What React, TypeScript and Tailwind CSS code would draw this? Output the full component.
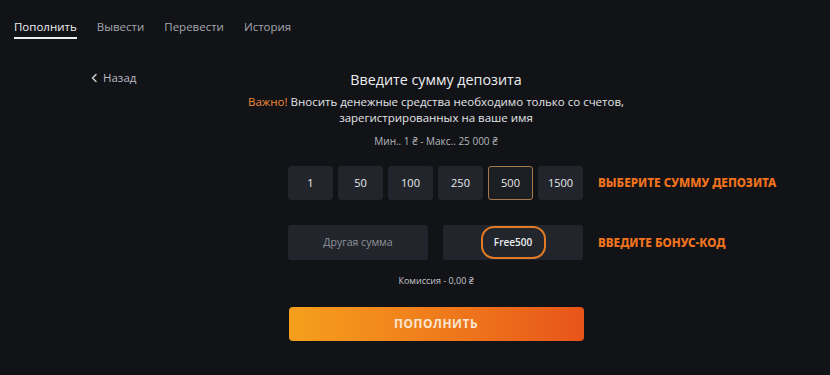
import React, { useState } from 'react';

const tabs = ['Пополнить', 'Вывести', 'Перевести', 'История'];
const amounts = ['1', '50', '100', '250', '500', '1500'];

const App: React.FC = () => {
    const [activeTab, setActiveTab] = useState('Пополнить');
    const [amount, setAmount] = useState('500');

    return (
        <div className="w-[830px] h-[375px] overflow-hidden bg-[#121317] text-[#e6e7ea]" style={{ fontFamily: '"Open Sans", "Noto Sans", sans-serif' }}>
            {/* Tabs */}
            <div className="flex gap-[20px] pl-[14px] pt-[19px]">
                {tabs.map(tab => (
                    <button
                        key={tab}
                        onClick={() => setActiveTab(tab)}
                        className={`text-[11.5px] leading-[16px] pb-[2px] border-b-2 ${activeTab === tab ? 'text-[#eceef0] border-[#eceef0]' : 'text-[#a3a7ae] border-transparent'}`}
                    >
                        {tab}
                    </button>
                ))}
            </div>

            <div className="flex pt-[30px]">
                {/* Back link */}
                <div className="w-[250px] pl-[90px]">
                    <button className="flex items-center gap-[4px] text-[11.5px] text-[#b9bcc2]">
                        <svg width="9" height="10" viewBox="0 0 9 10" fill="none">
                            <path d="M6 1.5L2.5 5L6 8.5" stroke="#c3c6cb" strokeWidth="1.6" strokeLinecap="round" strokeLinejoin="round" />
                        </svg>
                        Назад
                    </button>
                </div>

                {/* Main column */}
                <div className="w-[372px] flex flex-col items-center">
                    <h1 className="text-[14.3px] leading-[22px] text-[#eceef0]">Введите сумму депозита</h1>
                    <p className="mt-[3px] text-[11.5px] leading-[16px] text-center text-[#e2e4e7] whitespace-nowrap">
                        <span className="text-[#ee8a34]">Важно!</span> Вносить денежные средства необходимо только со счетов,
                        <br />
                        зарегистрированных на ваше имя
                    </p>
                    <p className="mt-[8px] text-[10px] leading-[14px] text-[#b4b7bd]">Мин.. 1 ₴ - Макс.. 25 000 ₴</p>

                    <div className="self-start ml-[38px] mt-[18px] flex items-center">
                        <div className="flex gap-[5px]">
                            {amounts.map(a => (
                                <button
                                    key={a}
                                    onClick={() => setAmount(a)}
                                    className={`w-[45px] h-[34px] rounded-[3px] text-[11px] text-[#e8e9ec] border ${amount === a ? 'bg-[#1b1e22] border-[#a8794b]' : 'bg-[#22262c] border-[#22262c]'}`}
                                >
                                    {a}
                                </button>
                            ))}
                        </div>
                        <span className="ml-[15px] whitespace-nowrap text-[11.7px] font-extrabold text-[#f2731e]" style={{ fontFamily: '"Noto Sans", sans-serif' }}>
                            ВЫБЕРИТЕ СУММУ ДЕПОЗИТА
                        </span>
                    </div>

                    <div className="self-start ml-[38px] mt-[25px] flex items-center">
                        <div className="flex gap-[15px]">
                            <div className="w-[140px] h-[35px] rounded-[3px] bg-[#22262c] flex items-center justify-center text-[10.5px] text-[#8f939a]">
                                Другая сумма
                            </div>
                            <div className="w-[140px] h-[35px] rounded-[3px] bg-[#22262c] flex items-center justify-center">
                                <span className="w-[65px] h-[33px] rounded-[13px] border-2 border-[#e27a25] flex items-center justify-center text-[10px] font-semibold text-[#eceef0]">
                                    Free500
                                </span>
                            </div>
                        </div>
                        <span className="ml-[15px] whitespace-nowrap text-[11.7px] font-extrabold text-[#f2731e]" style={{ fontFamily: '"Noto Sans", sans-serif' }}>
                            ВВЕДИТЕ БОНУС-КОД
                        </span>
                    </div>

                    <p className="mt-[15px] text-[9px] leading-[12px] text-[#c3c6cb]">Комиссия - 0,00 ₴</p>

                    <button className="mt-[20px] w-[295px] h-[34px] rounded-[4px] bg-gradient-to-r from-[#f59f1c] to-[#e8541a] text-[12px] font-bold tracking-[0.5px] text-[#f9e7d2]">
                        ПОПОЛНИТЬ
                    </button>
                </div>
            </div>
        </div>
    );
};

export default App;
